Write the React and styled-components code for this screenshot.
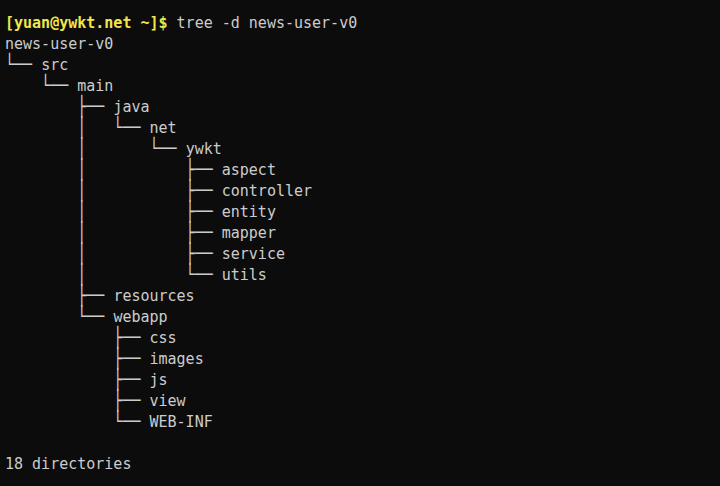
import React from 'react'
import styled, { createGlobalStyle } from 'styled-components';

const Global = createGlobalStyle`
  html, body {
    margin: 0;
    padding: 0;
    background: #0c0c0c;
  }
  body {
    width: 720px;
    height: 486px;
    overflow: hidden;
  }
`

const lines = [
  'news-user-v0',
  '└── src',
  '    └── main',
  '        ├── java',
  '        │   └── net',
  '        │       └── ywkt',
  '        │           ├── aspect',
  '        │           ├── controller',
  '        │           ├── entity',
  '        │           ├── mapper',
  '        │           ├── service',
  '        │           └── utils',
  '        ├── resources',
  '        └── webapp',
  '            ├── css',
  '            ├── images',
  '            ├── js',
  '            ├── view',
  '            └── WEB-INF',
  '',
  '18 directories',
]

// split "│   └── name" into the drawing part and the name
const splitLine = (text) => {
  const m = text.match(/^([\s│├└─]*)(.*)$/)
  return [m[1], m[2]]
}

function App() {
  return (
    <>
      <Global />
      <Terminal>
        <Line>
          <Prompt>[yuan@ywkt.net ~]$</Prompt> tree -d news-user-v0
        </Line>
        {lines.map((text, index) => {
          const [branch, name] = splitLine(text)
          return (
            <Line key={index}>
              {branch && <Branch>{branch}</Branch>}
              {name || (branch ? '' : '\u00a0')}
            </Line>
          )
        })}
      </Terminal>
    </>
  )
}

const Terminal = styled.div`
  width: 720px;
  height: 486px;
  box-sizing: border-box;
  padding: 13px 0 0 5px;
  background: #0c0c0c;
  color: #cccccc;
  font-family: "DejaVu Sans Mono", "Liberation Mono", monospace;
  font-size: 15px;
`

const Line = styled.div`
  height: 21px;
  line-height: 21px;
  white-space: pre;
`

const Branch = styled.span`
  display: inline-block;
  transform: scaleY(1.3);
  transform-origin: 50% 55%;
`

const Prompt = styled.span`
  color: #f1e64a;
  font-weight: bold;
`

export default App
